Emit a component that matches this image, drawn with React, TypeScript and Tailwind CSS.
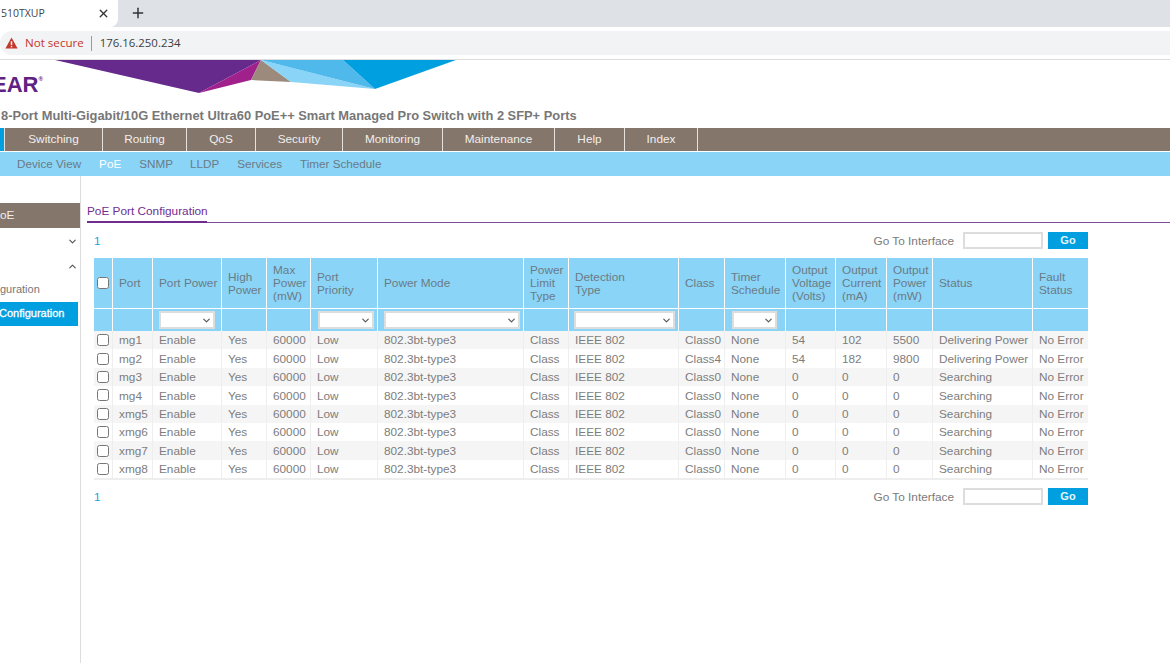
import { ChevronDown, ChevronUp, Plus, X } from 'lucide-react'

interface PortRow {
  port: string
  cls: string
  volts: string
  current: string
  power: string
  status: string
}

const colWidths = [
  'w-[19px]', 'w-[40px]', 'w-[69px]', 'w-[45px]', 'w-[44px]', 'w-[67px]', 'w-[146px]', 'w-[45px]',
  'w-[110px]', 'w-[46px]', 'w-[61px]', 'w-[50px]', 'w-[51px]', 'w-[46px]', 'w-[100px]', 'w-[55px]',
]

const headers = [
  ['Port'], ['Port Power'], ['High', 'Power'], ['Max', 'Power', '(mW)'], ['Port', 'Priority'], ['Power Mode'],
  ['Power', 'Limit', 'Type'], ['Detection', 'Type'], ['Class'], ['Timer', 'Schedule'],
  ['Output', 'Voltage', '(Volts)'], ['Output', 'Current', '(mA)'], ['Output', 'Power', '(mW)'], ['Status'], ['Fault', 'Status'],
]

const mainTabs = [
  { label: 'Switching', width: 'w-[98px]' },
  { label: 'Routing', width: 'w-[84px]' },
  { label: 'QoS', width: 'w-[69px]' },
  { label: 'Security', width: 'w-[87px]' },
  { label: 'Monitoring', width: 'w-[100px]' },
  { label: 'Maintenance', width: 'w-[112px]' },
  { label: 'Help', width: 'w-[70px]' },
  { label: 'Index', width: 'w-[73px]' },
]

const ports: PortRow[] = [
  { port: 'mg1', cls: 'Class0', volts: '54', current: '102', power: '5500', status: 'Delivering Power' },
  { port: 'mg2', cls: 'Class4', volts: '54', current: '182', power: '9800', status: 'Delivering Power' },
  { port: 'mg3', cls: 'Class0', volts: '0', current: '0', power: '0', status: 'Searching' },
  { port: 'mg4', cls: 'Class0', volts: '0', current: '0', power: '0', status: 'Searching' },
  { port: 'xmg5', cls: 'Class0', volts: '0', current: '0', power: '0', status: 'Searching' },
  { port: 'xmg6', cls: 'Class0', volts: '0', current: '0', power: '0', status: 'Searching' },
  { port: 'xmg7', cls: 'Class0', volts: '0', current: '0', power: '0', status: 'Searching' },
  { port: 'xmg8', cls: 'Class0', volts: '0', current: '0', power: '0', status: 'Searching' },
]

function FilterSelect({ width }: { width: string }) {
  return (
    <div className={`relative h-[18px] ${width}`}>
      <select className="block h-full w-full appearance-none border-2 border-[#dddddd] bg-white outline-none" />
      <ChevronDown className="absolute right-[3px] top-[4px] h-[11px] w-[11px] text-[#555555]" strokeWidth={2.5} />
    </div>
  )
}

function GoToBar() {
  return (
    <div className="flex h-[17px] items-center">
      <span className="pt-[2px] text-[11.8px] text-[#1e9fdc]">1</span>
      <span className="ml-auto pt-[2px] text-[11.8px] text-[#7a7a7a]">Go To Interface</span>
      <input className="ml-[9px] h-[17px] w-[80px] border-2 border-[#dddddd] bg-white outline-none" />
      <button className="ml-[5px] h-[17px] w-[40px] bg-[#00a0e0] text-center text-[11px] font-bold text-[#e6f6fd]">Go</button>
    </div>
  )
}

function BrowserBar() {
  return (
    <div className="font-['Open_Sans',sans-serif]">
      <div className="flex h-[27px] items-start bg-[#dee1e6]">
        <div className="flex h-[27px] w-[118px] items-center rounded-br-lg bg-white text-[10.5px] text-[#444444]">
          <span className="ml-px w-[96px]">510TXUP</span>
          <X className="h-[13px] w-[13px] text-[#333333]" strokeWidth={2.5} />
        </div>
        <Plus className="ml-[12px] mt-[5px] h-[16px] w-[16px] text-[#333333]" strokeWidth={2.2} />
      </div>
      <div className="flex h-[33px] items-center border-b border-[#dddddd] bg-white">
        <div className="flex h-[24px] w-full items-center rounded-l-xl bg-[#f1f3f4] pl-[5px]">
          <svg viewBox="0 0 14 13" className="h-[12px] w-[13px]">
            <path d="M7 0.5 L13.6 12.5 H0.4 Z" fill="#c5362b" />
            <rect x="6.2" y="4.5" width="1.6" height="4.2" fill="#f1f3f4" />
            <rect x="6.2" y="9.6" width="1.6" height="1.6" fill="#f1f3f4" />
          </svg>
          <span className="ml-[7px] text-[11.6px] text-[#c5362b]">Not secure</span>
          <span className="ml-[7px] h-[15px] w-px bg-[#9a9a9a]" />
          <span className="ml-[8px] text-[11.4px] text-[#3c4043]">176.16.250.234</span>
        </div>
      </div>
    </div>
  )
}

function Header() {
  return (
    <div className="relative h-[68px] overflow-hidden">
      <svg viewBox="0 0 402 34" className="absolute left-[55px] top-0 h-[34px] w-[402px]">
        <polygon points="0,0 206,0 144,33" fill="#652a8b" />
        <polygon points="206,0 196,20 144,33" fill="#a0218c" />
        <polygon points="206,0 196,20 236,22" fill="#9c8a7d" />
        <polygon points="206,0 236,22 320,29" fill="#8ad4f7" />
        <polygon points="206,0 288,0 320,29" fill="#4fb9ec" />
        <polygon points="288,0 401,0 320,29" fill="#00a0e0" />
      </svg>
      <div className="ml-[-8px] flex pt-[13px] text-[22px] font-bold leading-[24px] text-[#5f2282]">
        EAR<span className="mt-[2px] text-[6px] leading-[8px]">®</span>
      </div>
      <div className="ml-px mt-[11px] whitespace-nowrap text-[12.87px] font-bold leading-[16px] text-[#777777]">
        8-Port Multi-Gigabit/10G Ethernet Ultra60 PoE++ Smart Managed Pro Switch with 2 SFP+ Ports
      </div>
    </div>
  )
}

function Nav() {
  return (
    <>
      <div className="flex h-[23px] bg-[#84766b] text-[11.8px] text-[#f2efec]">
        <div className="w-[4px] bg-[#00a0e0]" />
        {mainTabs.map(tab => (
          <div key={tab.label} className={`flex items-center justify-center border-l border-[#e6e1dc] ${tab.width}`}>
            {tab.label}
          </div>
        ))}
        <div className="border-l border-[#e6e1dc]" />
      </div>
      <div className="flex h-[25px] items-center border-t border-white bg-[#8ad4f7] pl-[17px] text-[11.7px] text-[#6b7b85]">
        <span>Device View</span>
        <span className="ml-[18px] text-white">PoE</span>
        <span className="ml-[18px]">SNMP</span>
        <span className="ml-[17px]">LLDP</span>
        <span className="ml-[18px]">Services</span>
        <span className="ml-[18px]">Timer Schedule</span>
      </div>
    </>
  )
}

function Sidebar() {
  return (
    <div className="w-[81px] shrink-0 border-r border-[#dddddd] pt-[27px] text-[11.8px] text-[#777777]">
      <div className="flex h-[25px] items-center bg-[#84766b] pt-px text-[#f2efec]">oE</div>
      <div className="mt-px flex h-[25px] items-center justify-end pr-[2px]">
        <ChevronDown className="h-[11px] w-[11px] text-[#555555]" strokeWidth={2.5} />
      </div>
      <div className="flex h-[25px] items-center justify-end pr-[2px]">
        <ChevronUp className="h-[11px] w-[11px] text-[#555555]" strokeWidth={2.5} />
      </div>
      <div className="mb-[2px] flex h-[21px] items-center text-[11px]">guration</div>
      <div className="mr-[2px] flex h-[24px] items-center overflow-hidden bg-[#00a0e0] pb-[2px] text-[11px] text-white [-webkit-text-stroke:0.3px_white]">
        <span className="ml-[-1px]">Configuration</span>
      </div>
    </div>
  )
}

function PortTable() {
  const cell = 'border-r border-[#eeeeee] px-[6px] pt-[0.5px] whitespace-nowrap'
  return (
    <table className="w-[994px] table-fixed border-separate border-spacing-0">
      <colgroup>
        {colWidths.map((w, i) => (
          <col key={i} className={w} />
        ))}
      </colgroup>
      <thead className="bg-[#8ad4f7] text-[#6b7b85]">
        <tr className="h-[51px]">
          <th className="border-b border-r border-white pl-[3px] text-left font-normal">
            <input type="checkbox" className="block h-[12px] w-[12px]" />
          </th>
          {headers.map((lines, i) => (
            <th
              key={i}
              className={`border-b border-r border-white px-[6px] text-left text-[11.8px] font-normal leading-[13px] whitespace-nowrap last:border-r-0 ${lines.length === 2 ? 'pt-[2px]' : ''}`}
            >
              {lines.map(line => (
                <div key={line}>{line}</div>
              ))}
            </th>
          ))}
        </tr>
        <tr className="h-[22px]">
          <th className="border-r border-white" />
          <th className="border-r border-white" />
          <th className="border-r border-white px-[6px]"><FilterSelect width="w-[56px]" /></th>
          <th className="border-r border-white" />
          <th className="border-r border-white" />
          <th className="border-r border-white px-[7px]"><FilterSelect width="w-[56px]" /></th>
          <th className="border-r border-white pl-[6px]"><FilterSelect width="w-[136px]" /></th>
          <th className="border-r border-white" />
          <th className="border-r border-white pl-[5px]"><FilterSelect width="w-[101px]" /></th>
          <th className="border-r border-white" />
          <th className="border-r border-white pl-[7px]"><FilterSelect width="w-[45px]" /></th>
          <th className="border-r border-white" />
          <th className="border-r border-white" />
          <th className="border-r border-white" />
          <th className="border-r border-white" />
          <th />
        </tr>
      </thead>
      <tbody className="text-[11.8px] leading-[14px] text-[#7d7d7d]">
        {ports.map((row, i) => (
          <tr key={row.port} className={`h-[18.4px] ${i % 2 === 0 ? 'bg-[#f5f5f5]' : 'bg-white'}`}>
            <td className="border-r border-[#eeeeee] pl-[3px]">
              <input type="checkbox" className="block h-[12px] w-[12px]" />
            </td>
            <td className={cell}>{row.port}</td>
            <td className={cell}>Enable</td>
            <td className={cell}>Yes</td>
            <td className={cell}>60000</td>
            <td className={cell}>Low</td>
            <td className={cell}>802.3bt-type3</td>
            <td className={cell}>Class</td>
            <td className={cell}>IEEE 802</td>
            <td className={cell}>{row.cls}</td>
            <td className={cell}>None</td>
            <td className={cell}>{row.volts}</td>
            <td className={cell}>{row.current}</td>
            <td className={cell}>{row.power}</td>
            <td className={cell}>{row.status}</td>
            <td className="px-[6px] pt-[0.5px] whitespace-nowrap">No Error</td>
          </tr>
        ))}
      </tbody>
    </table>
  )
}

export default function App() {
  return (
    <div className="flex h-[663px] w-[1170px] flex-col overflow-hidden bg-white font-['Liberation_Sans',Arial,sans-serif]">
      <BrowserBar />
      <Header />
      <Nav />
      <div className="flex min-h-0 flex-1">
        <Sidebar />
        <div className="min-w-0 flex-1 pl-[6px] pt-[27px]">
          <div className="h-[20px] border-b border-[#7a4a9c]">
            <div className="h-[20px] w-[120px] whitespace-nowrap border-b-2 border-[#6f2c91] text-[11.8px] leading-[16px] text-[#6f2c91]">
              PoE Port Configuration
            </div>
          </div>
          <div className="w-[1001px] pl-[7px] pt-[9px]">
            <GoToBar />
            <div className="mt-[9px] border-b-2 border-[#eeeeee]">
              <PortTable />
            </div>
            <div className="mt-[7.8px]">
              <GoToBar />
            </div>
          </div>
        </div>
      </div>
    </div>
  )
}
